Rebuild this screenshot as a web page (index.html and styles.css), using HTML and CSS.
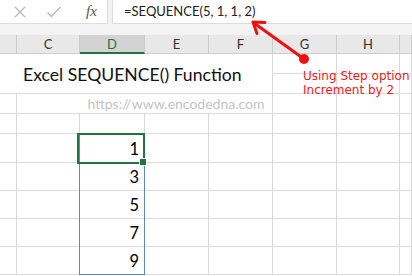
FILE: index.html
```html
<!DOCTYPE html>
<html lang="en">
<head>
  <meta charset="UTF-8" />
  <title>Excel SEQUENCE() Function</title>
  <link rel="stylesheet" href="styles.css">
</head>
<body>

  <div class="formula-bar">
    <div class="fx-tools">
      <svg class="tool" width="14" height="14" viewBox="0 0 14 14">
        <path d="M2 2 L12 12 M12 2 L2 12" stroke="#b8b8b8" stroke-width="1.3" fill="none"/>
      </svg>
      <svg class="tool" width="16" height="14" viewBox="0 0 16 14">
        <path d="M1.5 7.5 L5.5 11.5 L14.5 2" stroke="#b8b8b8" stroke-width="1.4" fill="none"/>
      </svg>
      <span class="fx">fx</span>
    </div>
    <div class="formula-input">=SEQUENCE(5, 1, 1, 2)</div>
  </div>

  <div class="sheet-wrap">
    <table class="sheet">
      <colgroup>
        <col class="c-b"><col class="c-c"><col class="c-d"><col class="c-e">
        <col class="c-f"><col class="c-g"><col class="c-h"><col class="c-i">
      </colgroup>
      <tr class="col-head">
        <th></th><th>C</th><th class="selected">D</th><th>E</th><th>F</th><th>G</th><th>H</th><th></th>
      </tr>
      <tr class="row-s">
        <td class="title" colspan="5" rowspan="2">Excel SEQUENCE() Function</td>
        <td></td><td></td><td></td>
      </tr>
      <tr class="row-s">
        <td></td><td></td><td></td>
      </tr>
      <tr class="row-s">
        <td></td><td class="no-right"></td>
        <td class="url" colspan="3">https://www.encodedna.com</td>
        <td></td><td></td><td></td>
      </tr>
      <tr class="row-s">
        <td></td><td></td><td></td><td></td><td></td><td></td><td></td><td></td>
      </tr>
      <tr class="row-l first">
        <td></td><td></td><td class="num">1</td><td></td><td></td><td></td><td></td><td></td>
      </tr>
      <tr class="row-l">
        <td></td><td></td><td class="num">3</td><td></td><td></td><td></td><td></td><td></td>
      </tr>
      <tr class="row-l">
        <td></td><td></td><td class="num">5</td><td></td><td></td><td></td><td></td><td></td>
      </tr>
      <tr class="row-l">
        <td></td><td></td><td class="num">7</td><td></td><td></td><td></td><td></td><td></td>
      </tr>
      <tr class="row-l">
        <td></td><td></td><td class="num">9</td><td></td><td></td><td></td><td></td><td></td>
      </tr>
    </table>
    <div class="spill-range"></div>
    <div class="active-cell"></div>
  </div>

  <div class="note">Using Step option<br>Increment by 2</div>

  <svg class="arrow" width="412" height="276" viewBox="0 0 412 276">
    <g stroke="#f01010" stroke-width="3" stroke-linecap="round" stroke-linejoin="round" fill="none">
      <path d="M304 59 L254 23"/>
      <path d="M265 22.5 L253 22 L257 33.5"/>
    </g>
    <circle cx="304" cy="59" r="5" fill="#f01010"/>
  </svg>

</body>
</html>
```

FILE: styles.css
```css
* { box-sizing: border-box; }
body {
  margin: 0;
  width: 412px;
  height: 276px;
  overflow: hidden;
  position: relative;
  background: #ffffff;
  font-family: Lato, 'Noto Sans', sans-serif;
  color: #1a1a1a;
}

.formula-bar {
  display: flex;
  gap: 4px;
  height: 35px;
  background: #f3f3f3;
  align-items: flex-start;
}

.fx-tools {
  width: 108px;
  height: 24px;
  background: #ffffff;
  border-right: 1px solid #dcdcdc;
  border-bottom: 1px solid #dcdcdc;
  display: flex;
  align-items: center;
  padding-left: 13px;
  gap: 19px;
}

.fx {
  font-family: 'Liberation Serif', serif;
  font-style: italic;
  font-size: 15px;
  color: #555555;
  margin-left: 5px;
}

.formula-input {
  flex: 1;
  height: 24px;
  background: #ffffff;
  border-left: 1px solid #dcdcdc;
  border-bottom: 1px solid #dcdcdc;
  padding-left: 11px;
  font-size: 13px;
  line-height: 23px;
  color: #222222;
}

.sheet-wrap {
  position: relative;
}

.sheet {
  border-spacing: 0;
  table-layout: fixed;
  width: 412px;
}

.c-b { width: 17px; }
.c-c { width: 63px; }
.c-d { width: 65px; }
.c-e { width: 64px; }
.c-f { width: 64px; }
.c-g { width: 64px; }
.c-h { width: 63px; }
.c-i { width: 12px; }

.sheet th,
.sheet td {
  padding: 0;
  border-right: 1px solid #dadada;
  border-bottom: 1px solid #dadada;
}

.col-head th {
  height: 19px;
  background: #e8e8e8;
  border-right-color: #cdcdcd;
  border-bottom-color: #cdcdcd;
  font-weight: normal;
  font-size: 13px;
  color: #333333;
}

.col-head th.selected {
  background: #d3d3d3;
  color: #217346;
  border-bottom: 2px solid #217346;
}

.row-s td { height: 20px; }
.row-l td { height: 28px; }
.row-l.first td { height: 29px; }

.sheet td.no-right { border-right: none; }

.title {
  font-size: 17.6px;
  padding-left: 23px !important;
  padding-top: 2px !important;
  color: #111111;
  white-space: nowrap;
}

.url {
  text-align: center;
  font-size: 14px;
  color: #c4c4c4;
  white-space: nowrap;
}

.num {
  text-align: right;
  vertical-align: bottom;
  font-size: 16.5px;
  padding-right: 5px !important;
  padding-bottom: 3px !important;
  color: #000000;
}

.spill-range {
  position: absolute;
  left: 79px;
  top: 99px;
  width: 66px;
  height: 141px;
  border: 1px solid #5b86d4;
}

.active-cell {
  position: absolute;
  left: 77px;
  top: 98px;
  width: 68px;
  height: 31px;
  border: 2px solid #217346;
}

.active-cell::after {
  content: "";
  position: absolute;
  right: -4px;
  bottom: -4px;
  width: 6px;
  height: 6px;
  background: #217346;
  border: 1px solid #ffffff;
}

.note {
  position: absolute;
  left: 303px;
  top: 69px;
  font-family: 'DejaVu Sans', sans-serif;
  font-size: 12px;
  line-height: 14px;
  color: #f01a1a;
  white-space: nowrap;
}

.arrow {
  position: absolute;
  left: 0;
  top: 0;
  pointer-events: none;
}
```
